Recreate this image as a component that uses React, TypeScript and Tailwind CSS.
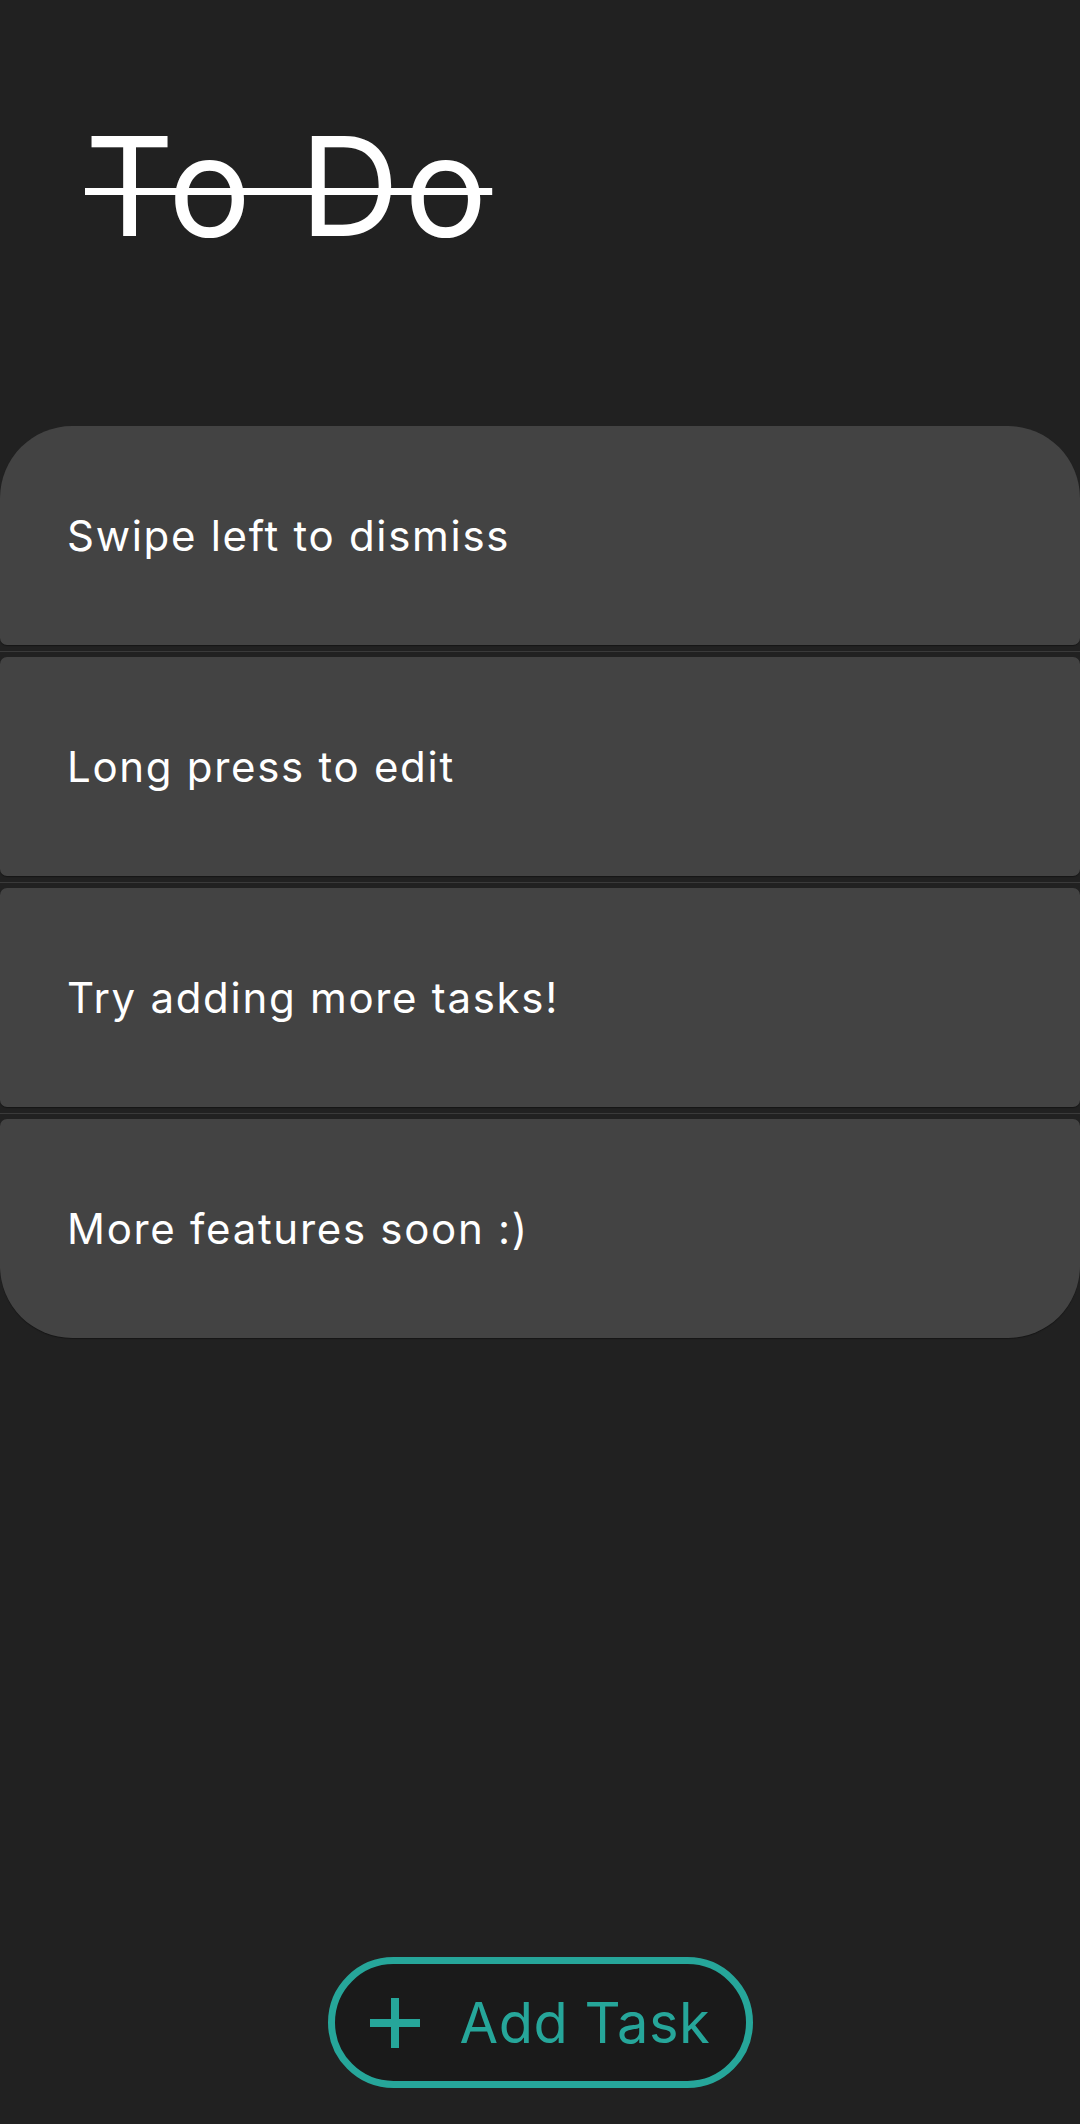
import React from 'react';

const tasks = [
  'Swipe left to dismiss',
  'Long press to edit',
  'Try adding more tasks!',
  'More features soon :)',
];

const App: React.FC = () => {
  return (
    <div className="flex h-[2124px] w-full flex-col bg-[#212121] font-['Inter',sans-serif]">
      {/* Title */}
      <div className="h-[426px] pl-[85px] pt-[117px]">
        <h1 className="text-[138px] font-normal leading-none tracking-[5px] text-white line-through decoration-[7px]">
          To Do
        </h1>
      </div>

      {/* Task list */}
      <div className="flex flex-col">
        {tasks.map((task, i) => {
          const first = i === 0;
          const last = i === tasks.length - 1;
          return (
            <React.Fragment key={task}>
              {i > 0 && (
                <div className="flex h-[12px] items-center">
                  <div className="h-px w-full bg-[#3a3a3a]" />
                </div>
              )}
              <div
                className={
                  'flex h-[219px] items-center bg-[#434343] pl-[67px] shadow-[0_1px_1px_rgba(0,0,0,0.35)] ' +
                  (first
                    ? 'rounded-t-[72px] rounded-b-[7px]'
                    : last
                    ? 'rounded-b-[72px] rounded-t-[7px]'
                    : 'rounded-[7px]')
                }
              >
                <span className="text-[42px] tracking-[1.7px] text-white">{task}</span>
              </div>
            </React.Fragment>
          );
        })}
      </div>

      {/* Add button */}
      <div className="mt-auto flex justify-center pb-[36px]">
        <button className="flex h-[131px] w-[425px] items-center rounded-full border-[7px] border-[#26a69a] bg-[#1a1a1a] pl-[33px] text-[#26a69a]">
          <svg width="54" height="54" viewBox="0 0 54 54" className="shrink-0">
            <path d="M27 2v50M2 27h50" stroke="#26a69a" strokeWidth="8" />
          </svg>
          <span className="ml-[38px] text-[56px] leading-none tracking-[0.5px]">Add Task</span>
        </button>
      </div>
    </div>
  );
};

export default App;
